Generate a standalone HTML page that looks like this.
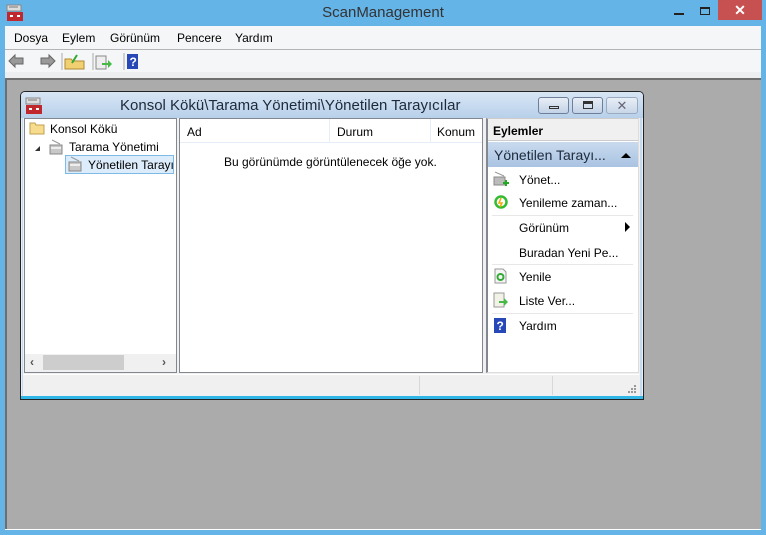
<!DOCTYPE html>
<html><head><meta charset="utf-8"><style>
*{margin:0;padding:0;box-sizing:border-box}
body{width:766px;height:535px;overflow:hidden;background:#65b4e8;font-family:"Liberation Sans",sans-serif;font-size:12px;color:#000;position:relative}
.a{position:absolute}
.t{white-space:nowrap}
</style></head><body>
<div class="a t" style="left:0;top:4px;width:766px;text-align:center;font-size:15px;color:#333">ScanManagement</div>
<svg class="a" style="left:6px;top:4px" width="18" height="18"><rect x="1" y="1" width="14" height="6" fill="#ddd" stroke="#888"/><line x1="3" y1="3" x2="12" y2="3" stroke="#777"/><rect x="1" y="8" width="16" height="9" fill="#c0282d"/><rect x="4" y="11" width="3" height="2" fill="#fff"/><rect x="11" y="11" width="3" height="2" fill="#fff"/></svg>
<div class="a" style="left:674px;top:13px;width:10px;height:2px;background:#222"></div>
<div class="a" style="left:700px;top:7px;width:10px;height:8px;border:1px solid #222;border-top-width:2px"></div>
<div class="a" style="left:718px;top:0;width:44px;height:20px;background:#c75050;color:#fff;text-align:center;font-size:14px;line-height:20px;font-weight:bold">✕</div>
<div class="a" style="left:5px;top:26px;width:756px;height:23px;background:#f5f6f7"></div>
<div class="a t" style="left:14px;top:31px">Dosya</div>
<div class="a t" style="left:62px;top:31px">Eylem</div>
<div class="a t" style="left:110px;top:31px">Görünüm</div>
<div class="a t" style="left:177px;top:31px">Pencere</div>
<div class="a t" style="left:235px;top:31px">Yardım</div>
<div class="a" style="left:5px;top:49px;width:756px;height:1px;background:#b4b4b4"></div>
<div class="a" style="left:5px;top:50px;width:756px;height:22px;background:#f5f6f7"></div>
<div class="a" style="left:5px;top:72px;width:756px;height:6px;background:#eceef0"></div>
<svg class="a" style="left:8px;top:53px" width="140" height="18">
<path d="M1 8 L7 2 V5 H15 V11 H7 V14 Z" fill="#999" stroke="#666"/>
<path d="M47 8 L41 2 V5 H33 V11 H41 V14 Z" fill="#999" stroke="#666"/>
<line x1="54" y1="0" x2="54" y2="17" stroke="#aaa"/>
<path d="M57 6 H63 L65 8 H76 V16 H57 Z" fill="#f0d070" stroke="#b08a30"/>
<path d="M64 10 L69 2" stroke="#3a3" stroke-width="2"/>
<line x1="85" y1="0" x2="85" y2="17" stroke="#aaa"/>
<rect x="88" y="3" width="10" height="13" fill="#eee" stroke="#888"/>
<path d="M94 10 H100 V7 L104 11 L100 15 V12 H94Z" fill="#4b4"/>
<line x1="116" y1="0" x2="116" y2="17" stroke="#aaa"/>
<rect x="119" y="1" width="11" height="15" fill="#2848b8"/>
<text x="121.5" y="13" font-size="12" fill="#fff" font-weight="bold" font-family="Liberation Sans">?</text>
</svg>
<div class="a" style="left:5px;top:78px;width:756px;height:451px;background:#ababab;border-top:2px solid #6e6e6e;border-left:2px solid #6e6e6e"></div>
<div class="a" style="left:5px;top:529px;width:756px;height:1px;background:#fff"></div>
<div class="a" style="left:20px;top:91px;width:624px;height:309px;background:#c5daf0;border:1px solid #222;border-radius:5px 5px 0 0;box-shadow:inset 0 0 0 1px #e6eef8"></div>
<div class="a" style="left:21px;top:92px;width:622px;height:26px;background:linear-gradient(#d8e6f5,#b8d0ea);border-radius:4px 4px 0 0"></div>
<svg class="a" style="left:25px;top:97px" width="18" height="18"><rect x="1" y="1" width="14" height="6" fill="#ddd" stroke="#888"/><line x1="3" y1="3" x2="12" y2="3" stroke="#777"/><rect x="1" y="8" width="16" height="9" fill="#c0282d"/><rect x="4" y="11" width="3" height="2" fill="#fff"/><rect x="11" y="11" width="3" height="2" fill="#fff"/></svg>
<div class="a t" style="left:120px;top:97px;font-size:15px;color:#1e2a3a">Konsol Kökü\Tarama Yönetimi\Yönetilen Tarayıcılar</div>
<div class="a" style="left:538px;top:97px;width:31px;height:17px;border:1px solid #6d7f99;border-radius:3px;background:linear-gradient(#e8eef6,#c2d2e6)"><div style="margin:8px auto 0;width:10px;height:3px;border:1px solid #333"></div></div>
<div class="a" style="left:572px;top:97px;width:31px;height:17px;border:1px solid #6d7f99;border-radius:3px;background:linear-gradient(#e8eef6,#c2d2e6)"><div style="margin:3px auto 0;width:10px;height:8px;border:1px solid #333;border-top-width:3px"></div></div>
<div class="a" style="left:606px;top:97px;width:32px;height:17px;border:1px solid #9aaac0;border-radius:3px;background:linear-gradient(#e8eef6,#c8d6e8);text-align:center;color:#667;font-size:13px;line-height:15px">✕</div>
<div class="a" style="left:23px;top:118px;width:617px;height:279px;background:#f0f0f0"></div>
<div class="a" style="left:24px;top:118px;width:153px;height:255px;background:#fff;border:1px solid #828790"></div>
<svg class="a" style="left:29px;top:121px" width="16" height="14"><path d="M1 2 H6 L7 4 H15 V13 H1 Z" fill="#f6dc8c" stroke="#c0a050"/></svg>
<div class="a t" style="left:50px;top:122px">Konsol Kökü</div>
<div class="a" style="left:35px;top:146px;width:0;height:0;border-left:5px solid transparent;border-bottom:5px solid #333"></div>
<svg class="a" style="left:48px;top:139px" width="16" height="16"><rect x="2" y="6" width="12" height="9" fill="#c8c8c8" stroke="#888"/><line x1="4" y1="1" x2="12" y2="5" stroke="#999"/><rect x="3" y="8" width="10" height="2" fill="#eee"/></svg>
<div class="a t" style="left:69px;top:140px">Tarama Yönetimi</div>
<div class="a" style="left:65px;top:155px;width:109px;height:19px;background:#ddecfb;border:1px solid #7dbbe6"></div>
<svg class="a" style="left:67px;top:156px" width="16" height="16"><rect x="2" y="6" width="12" height="9" fill="#c8c8c8" stroke="#888"/><line x1="4" y1="1" x2="12" y2="5" stroke="#999"/><rect x="3" y="8" width="10" height="2" fill="#eee"/></svg>
<div class="a t" style="left:88px;top:158px;width:85px;overflow:hidden">Yönetilen Tarayıcılar</div>
<div class="a" style="left:25px;top:354px;width:151px;height:18px;background:#f0f0f0"></div>
<div class="a" style="left:43px;top:355px;width:81px;height:15px;background:#cdcdcd"></div>
<div class="a t" style="left:30px;top:355px;color:#555;font-weight:bold">‹</div>
<div class="a t" style="left:162px;top:355px;color:#555;font-weight:bold">›</div>
<div class="a" style="left:179px;top:118px;width:304px;height:255px;background:#fff;border:1px solid #828790"></div>
<div class="a" style="left:180px;top:119px;width:302px;height:24px;background:#fff;border-bottom:1px solid #e5eef8"></div>
<div class="a" style="left:329px;top:119px;width:1px;height:24px;background:#e5eef8"></div>
<div class="a" style="left:430px;top:119px;width:1px;height:24px;background:#e5eef8"></div>
<div class="a t" style="left:187px;top:125px">Ad</div>
<div class="a t" style="left:337px;top:125px">Durum</div>
<div class="a t" style="left:437px;top:125px">Konum</div>
<div class="a t" style="left:224px;top:155px">Bu görünümde görüntülenecek öğe yok.</div>
<div class="a" style="left:486px;top:118px;width:153px;height:255px;background:#fff;border-left:2px solid #828790;border-top:1px solid #ccc;border-right:1px solid #ddd;border-bottom:1px solid #ddd"></div>
<div class="a" style="left:488px;top:119px;width:150px;height:22px;background:#f0f0f0;border-bottom:1px solid #ccc"></div>
<div class="a t" style="left:493px;top:124px;font-weight:bold">Eylemler</div>
<div class="a" style="left:488px;top:142px;width:150px;height:25px;background:linear-gradient(#c9daee,#a9c3e2)"></div>
<div class="a t" style="left:494px;top:147px;font-size:14px;color:#1e2a3a">Yönetilen Tarayı...</div>
<div class="a" style="left:621px;top:153px;width:0;height:0;border-left:5px solid transparent;border-right:5px solid transparent;border-bottom:5px solid #000"></div>
<svg class="a" style="left:493px;top:171px" width="16" height="16"><rect x="1" y="6" width="11" height="8" fill="#bbb" stroke="#888"/><line x1="2" y1="1" x2="11" y2="5" stroke="#999"/><path d="M10 12 H16 M13 9 V15" stroke="#2a2" stroke-width="2"/></svg>
<div class="a t" style="left:519px;top:173px">Yönet...</div>
<svg class="a" style="left:493px;top:194px" width="16" height="16"><circle cx="8" cy="8" r="5.5" fill="none" stroke="#3b3" stroke-width="2.5"/><path d="M8 4 L6 9 H9 L7 13" stroke="#ea0" stroke-width="1.5" fill="none"/></svg>
<div class="a t" style="left:519px;top:196px">Yenileme zaman...</div>
<div class="a" style="left:492px;top:215px;width:141px;height:1px;background:#e8e8e8"></div>
<div class="a t" style="left:519px;top:221px">Görünüm</div>
<div class="a" style="left:625px;top:222px;width:0;height:0;border-top:5px solid transparent;border-bottom:5px solid transparent;border-left:5px solid #000"></div>
<div class="a t" style="left:519px;top:246px">Buradan Yeni Pe...</div>
<div class="a" style="left:492px;top:264px;width:141px;height:1px;background:#e8e8e8"></div>
<svg class="a" style="left:493px;top:268px" width="16" height="16"><path d="M2 1 H10 L13 4 V15 H2 Z" fill="#f4f4f4" stroke="#999"/><circle cx="7.5" cy="9" r="3" fill="none" stroke="#3a3" stroke-width="2"/></svg>
<div class="a t" style="left:519px;top:270px">Yenile</div>
<svg class="a" style="left:493px;top:292px" width="16" height="16"><rect x="1" y="1" width="10" height="14" fill="#f2f2e6" stroke="#999"/><path d="M6 9 H11 V6 L15 10 L11 14 V11 H6Z" fill="#4b4"/></svg>
<div class="a t" style="left:519px;top:294px">Liste Ver...</div>
<div class="a" style="left:492px;top:313px;width:141px;height:1px;background:#e8e8e8"></div>
<svg class="a" style="left:493px;top:317px" width="14" height="16"><rect x="1" y="1" width="12" height="15" fill="#2848b8"/><text x="3.5" y="13" font-size="12" fill="#fff" font-weight="bold" font-family="Liberation Sans">?</text></svg>
<div class="a t" style="left:519px;top:319px">Yardım</div>
<div class="a" style="left:23px;top:374px;width:616px;height:22px;background:#f0f0f0;border-top:1px solid #fff"></div>
<div class="a" style="left:419px;top:376px;width:1px;height:19px;background:#d8d8d8"></div>
<div class="a" style="left:552px;top:376px;width:1px;height:19px;background:#d8d8d8"></div>
<svg class="a" style="left:628px;top:385px" width="9" height="9"><g fill="#999"><rect x="6" y="0" width="2" height="2"/><rect x="3" y="3" width="2" height="2"/><rect x="6" y="3" width="2" height="2"/><rect x="0" y="6" width="2" height="2"/><rect x="3" y="6" width="2" height="2"/><rect x="6" y="6" width="2" height="2"/></g></svg>
<div class="a" style="left:21px;top:396px;width:622px;height:3px;background:#2fb6e6"></div>
</body></html>
